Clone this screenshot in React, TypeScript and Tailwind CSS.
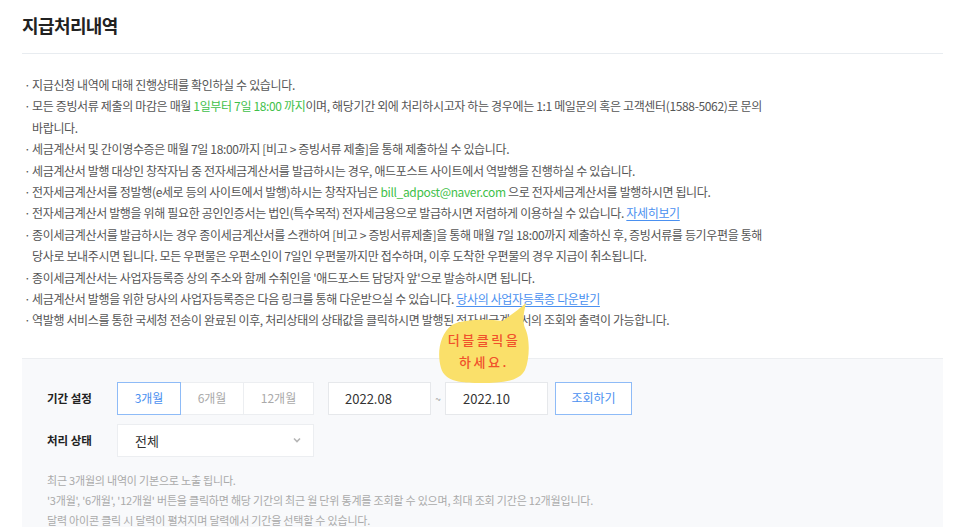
import React from "react";

const font = { fontFamily: '"Noto Sans CJK KR", "Noto Sans", sans-serif' };

const Bullet = ({ children }: { children: React.ReactNode }) => (
  <li className="flex whitespace-nowrap">
    <span className="w-[10px] shrink-0 pl-[2px]">·</span>
    <span>{children}</span>
  </li>
);

const Green = ({ children }: { children: React.ReactNode }) => (
  <span className="text-[#3fbf4a]">{children}</span>
);

const Link = ({ children }: { children: React.ReactNode }) => (
  <a className="text-[#4a90f0] underline underline-offset-2">{children}</a>
);

const Bubble = () => (
  <div className="absolute left-[436px] top-[298px] w-[96px] h-[90px]">
    <svg width="96" height="90" viewBox="0 0 96 90" className="absolute inset-0">
      <path
        d="M16 27 C26 21 52 21 66 23 C74 18 82 12 90 5 C88 14 86 22 89 30 C94 40 94 60 89 72 C83 84 64 85 46 85 C26 85 9 84 5 70 C1 56 3 37 16 27 Z"
        fill="#fae06a"
      />
    </svg>
    <div
      className="absolute left-0 top-[31px] w-[96px] text-center text-[13px] leading-[22px] text-[#f0512b] tracking-[2.5px] font-medium"
      style={font}
    >
      더블클릭을
      <br />
      하세요.
    </div>
  </div>
);

export default function App() {
  return (
    <div className="relative w-[966px] h-[527px] overflow-hidden bg-white text-[#555]" style={font}>
      <div className="px-[22px] pr-[23px]">
        <h1 className="pt-[12px] h-[53px] text-[18px] font-bold text-[#222] tracking-[-0.6px]">지급처리내역</h1>
        <div className="border-t border-[#e8ecf0]" />

        <ul className="mt-[20px] text-[12px] leading-[21.4px] tracking-[-0.35px]">
          <Bullet>지급신청 내역에 대해 진행상태를 확인하실 수 있습니다.</Bullet>
          <Bullet>
            모든 증빙서류 제출의 마감은 매월 <Green>1일부터 7일 18:00 까지</Green>이며, 해당기간 외에 처리하시고자 하는 경우에는 1:1 메일문의 혹은 고객센터(1588-5062)로 문의
            <br />
            바랍니다.
          </Bullet>
          <Bullet>세금계산서 및 간이영수증은 매월 7일 18:00까지 [비고 &gt; 증빙서류 제출]을 통해 제출하실 수 있습니다.</Bullet>
          <Bullet>세금계산서 발행 대상인 창작자님 중 전자세금계산서를 발급하시는 경우, 애드포스트 사이트에서 역발행을 진행하실 수 있습니다.</Bullet>
          <Bullet>
            전자세금계산서를 정발행(e세로 등의 사이트에서 발행)하시는 창작자님은 <Green>bill_adpost@naver.com</Green> 으로 전자세금계산서를 발행하시면 됩니다.
          </Bullet>
          <Bullet>
            전자세금계산서 발행을 위해 필요한 공인인증서는 법인(특수목적) 전자세금용으로 발급하시면 저렴하게 이용하실 수 있습니다. <Link>자세히보기</Link>
          </Bullet>
          <Bullet>
            종이세금계산서를 발급하시는 경우 종이세금계산서를 스캔하여 [비고 &gt; 증빙서류제출]을 통해 매월 7일 18:00까지 제출하신 후, 증빙서류를 등기우편을 통해
            <br />
            당사로 보내주시면 됩니다. 모든 우편물은 우편소인이 7일인 우편물까지만 접수하며, 이후 도착한 우편물의 경우 지급이 취소됩니다.
          </Bullet>
          <Bullet>종이세금계산서는 사업자등록증 상의 주소와 함께 수취인을 '애드포스트 담당자 앞'으로 발송하시면 됩니다.</Bullet>
          <Bullet>
            세금계산서 발행을 위한 당사의 사업자등록증은 다음 링크를 통해 다운받으실 수 있습니다. <Link>당사의 사업자등록증 다운받기</Link>
          </Bullet>
          <Bullet>역발행 서비스를 통한 국세청 전송이 완료된 이후, 처리상태의 상태값을 클릭하시면 발행된 전자세금계산서의 조회와 출력이 가능합니다.</Bullet>
        </ul>

        <div className="mt-[27px] border-t border-[#eceef1] bg-[#f8f9fb] h-[200px] pl-[25px] pt-[23px]">
          <div className="flex items-center">
            <div className="w-[70px] text-[11.5px] font-bold text-[#222]">기간 설정</div>
            <div className="flex h-[33px] bg-white text-[12px]">
              <button className="w-[64px] border border-[#8ebbf7] text-[#4a90f0]">3개월</button>
              <button className="w-[63px] border-y border-r border-[#eceef1] text-[#aaa]">6개월</button>
              <button className="w-[70px] border-y border-r border-[#eceef1] text-[#aaa]">12개월</button>
            </div>
            <div className="ml-[14px] flex h-[33px] w-[103px] items-center border border-[#e6e8eb] bg-white pl-[16px] text-[13px] text-[#333]">
              2022.08
            </div>
            <div className="w-[14px] text-center text-[10px] text-[#999]">~</div>
            <div className="flex h-[33px] w-[103px] items-center border border-[#e6e8eb] bg-white pl-[17px] text-[13px] text-[#333]">
              2022.10
            </div>
            <button className="ml-[7px] h-[33px] w-[77px] border border-[#8ebbf7] bg-white text-[12px] text-[#4a90f0]">조회하기</button>
          </div>

          <div className="mt-[9px] flex items-center">
            <div className="w-[70px] text-[11.5px] font-bold text-[#222]">처리 상태</div>
            <div className="flex h-[33px] w-[197px] items-center justify-between border border-[#eceef1] bg-white pl-[17px] pr-[12px] text-[13px] text-[#333]">
              <span>전체</span>
              <svg width="8" height="6" viewBox="0 0 8 6">
                <path d="M1 1.5 L4 4.5 L7 1.5" stroke="#b5b5b5" strokeWidth="1.6" fill="none" />
              </svg>
            </div>
          </div>

          <div className="mt-[13px] text-[11px] leading-[20px] text-[#aaa] tracking-[-0.2px]">
            <p>최근 3개월의 내역이 기본으로 노출 됩니다.</p>
            <p>'3개월', '6개월', '12개월' 버튼을 클릭하면 해당 기간의 최근 월 단위 통계를 조회할 수 있으며, 최대 조회 기간은 12개월입니다.</p>
            <p>달력 아이콘 클릭 시 달력이 펼쳐지며 달력에서 기간을 선택할 수 있습니다.</p>
          </div>
        </div>
      </div>
      <Bubble />
    </div>
  );
}
